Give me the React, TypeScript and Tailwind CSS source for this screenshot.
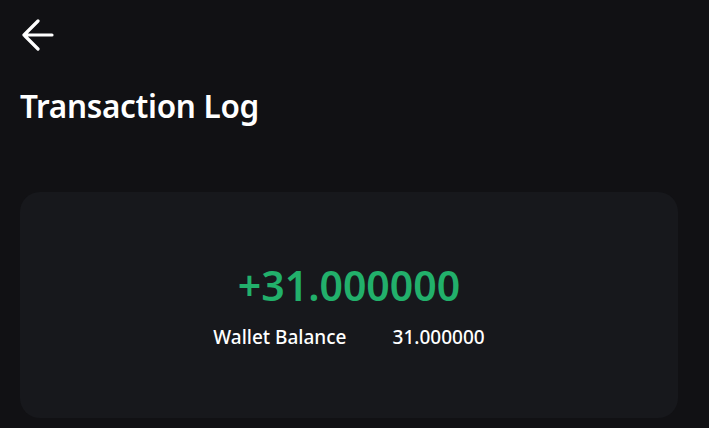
export default function App() {
  return (
    <div
      className="flex h-[428px] w-[709px] flex-col overflow-hidden bg-[#111114] px-5 text-white"
      style={{ fontFamily: '"Noto Sans", "Liberation Sans", sans-serif' }}
    >
      <button className="mt-[19px] flex h-[32px] w-[36px] items-center">
        <svg width="34" height="32" viewBox="0 0 34 32" fill="none">
          <path
            d="M18 2 L4 16 L18 30 M4 16 H32"
            stroke="white"
            strokeWidth="3.2"
            strokeLinecap="round"
            strokeLinejoin="round"
          />
        </svg>
      </button>

      <h1 className="mt-[35px] text-[31.5px] font-semibold leading-[40px] tracking-[-0.3px]">
        Transaction Log
      </h1>

      {/* Balance Card */}
      <div className="mt-[66px] flex h-[226px] w-[658px] flex-col items-center justify-center rounded-[20px] bg-[#17181c]">
        <div className="text-[41px] font-semibold leading-[48px] text-[#22b06b]">
          +31.000000
        </div>
        <div className="mt-[15px] flex items-center gap-[46px] text-[19px] font-medium leading-[26px]">
          <span>Wallet Balance</span>
          <span>31.000000</span>
        </div>
      </div>
    </div>
  );
}
